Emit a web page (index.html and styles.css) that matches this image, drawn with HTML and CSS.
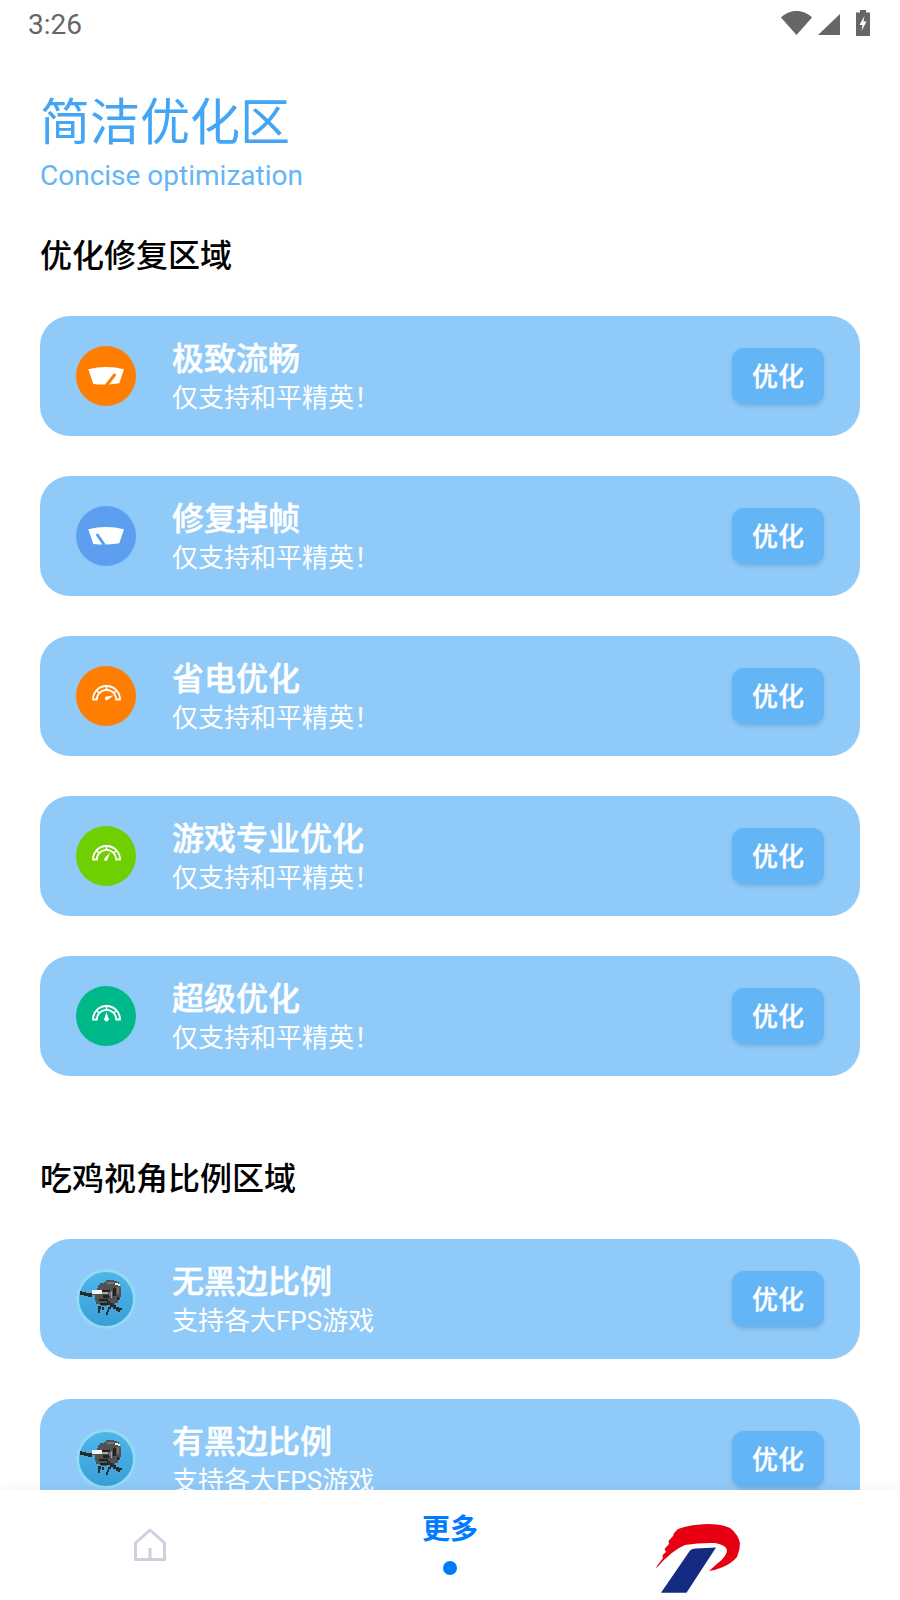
FILE: index.html
```html
<!DOCTYPE html>
<html lang="zh">
<head>
<meta charset="utf-8">
<title>简洁优化区</title>
<link rel="stylesheet" href="styles.css">
</head>
<body>
<svg class="defs" width="0" height="0">
  <defs>
    <linearGradient id="sky" x1="0" y1="0" x2="0" y2="1">
      <stop offset="0" stop-color="#4db6ea"/>
      <stop offset="1" stop-color="#3a9fd8"/>
    </linearGradient>
    <g id="gauge" fill="none" stroke="#fff">
      <path stroke-width="1.8" d="M17 33.500a13.500 13.500 0 0 1 27 0h-3.800a9.700 9.700 0 0 0-19.400 0z"/>
      <path stroke-width="1.600" d="M21 25l3 2.700M30.500 20v4.200M40 25l-3 2.700"/>
    </g>
    <g id="soldier">
      <circle cx="30" cy="30" r="30" fill="#93daf5"/>
      <circle cx="30" cy="30" r="27" fill="url(#sky)"/>
      <g shape-rendering="crispEdges">
        <path fill="#525252" d="M28 13h2v-2h8v1h3v1h2v2h1v3h1v10h-1v3h-2v3h-3v2H31v1h-6v-2h-5v-3h-1v-6h-3v-3h3v-2h2v-2h1v-3h2v-2h3z"/>
        <path fill="#757575" d="M31 13h7v2h-7zM41 18h2v7h-2zM33 22h3v5h-3z"/>
        <path fill="#222" d="M26 21h8v2h-8zM27 26h6v3h-6zM37 19h3v8h-3zM23 30h9v2h-9zM24 34h7v2h-7zM41 28h2v3h-2z"/>
        <path fill="#f4f4f4" d="M16 21h10v4H16zM39 14h3v1h2v2h-2v-1h-3z"/>
        <path fill="#a8a8a8" d="M35 23h1v6h-1zM26 23h6v2h-6z"/>
        <path fill="#2a2a2a" d="M4 22h2v1h4v1h6v4h-4v-1H8v-1H4zM31 32h3v2h3v2h3v2h3v1h3v2h-2v2h-2v-1h-2v-2h-3v-2h-3v-2h-3zM32 38h3v2h-2v3h-1v3h-2v-3h1v-2h1zM22 37h3v3h-1v4h-2zM26 38h2v3h-2z"/>
      </g>
    </g>
  </defs>
</svg>
<div class="app">
  <header class="status">
    <span class="time">3:26</span>
    <div class="status-icons">
      <svg class="wifi" width="31" height="24" viewBox="0 0 31 24"><path fill="#666" d="M15.500 24L0 6.500C4 2.500 9.500 0 15.500 0S27 2.500 31 6.500z"/></svg>
      <svg class="signal" width="22" height="21" viewBox="0 0 22 21"><path fill="#666" d="M22 0v21H0z"/></svg>
      <svg class="battery" width="14" height="26" viewBox="0 0 14 26"><path fill="#666" d="M4 0h6v2.500h4V26H0V2.500h4z"/><path fill="#fff" d="M8.500 6L3.500 15h3l-1 6 5-9.500h-3z"/></svg>
    </div>
  </header>
  <main class="content">
    <div class="hero">
      <h1 class="hero-title">简洁优化区</h1>
      <p class="hero-sub">Concise optimization</p>
    </div>
    <section class="group">
      <h2 class="group-title">优化修复区域</h2>
      <article class="card">
        <div class="badge orange">
          <svg viewBox="0 0 60 60"><path fill="#fff" d="M12.300 23.300Q30 18.500 48 23.300L43.300 37.300Q30 39.500 17.300 38z"/><path fill="none" stroke="#ff7d00" stroke-width="3" stroke-linecap="round" d="M31 38.500l7.500-9.500"/></svg>
        </div>
        <div class="card-text"><h3>极致流畅</h3><p>仅支持和平精英！</p></div>
        <button class="opt">优化</button>
      </article>
      <article class="card">
        <div class="badge blue">
          <svg viewBox="0 0 60 60"><path fill="#fff" d="M12.300 23.300Q30 18.500 48 23.300L43.300 37.300Q30 39.500 17.300 38z"/><path fill="none" stroke="#5c9ff0" stroke-width="3" stroke-linecap="round" d="M28 38.500l-6.500-9.500"/></svg>
        </div>
        <div class="card-text"><h3>修复掉帧</h3><p>仅支持和平精英！</p></div>
        <button class="opt">优化</button>
      </article>
      <article class="card">
        <div class="badge orange">
          <svg viewBox="0 0 60 60"><use href="#gauge"/><path fill="#fff" d="M29 33a2 2 0 0 1 1.500-2.500l7-1-6 4.500a2 2 0 0 1-2.500-1z"/></svg>
        </div>
        <div class="card-text"><h3>省电优化</h3><p>仅支持和平精英！</p></div>
        <button class="opt">优化</button>
      </article>
      <article class="card">
        <div class="badge green">
          <svg viewBox="0 0 60 60"><use href="#gauge"/><path fill="#fff" d="M28.500 34.500a2.200 2.200 0 0 1 .5-2.800l5-5.200-2.400 7a2 2 0 0 1-3.100 1z"/></svg>
        </div>
        <div class="card-text"><h3>游戏专业优化</h3><p>仅支持和平精英！</p></div>
        <button class="opt">优化</button>
      </article>
      <article class="card">
        <div class="badge teal">
          <svg viewBox="0 0 60 60"><use href="#gauge"/><path fill="#fff" d="M28.800 34.500a2.200 2.200 0 0 1 0-3l1.700-5.500 1.700 5.500a2.200 2.200 0 0 1-3.400 3z"/></svg>
        </div>
        <div class="card-text"><h3>超级优化</h3><p>仅支持和平精英！</p></div>
        <button class="opt">优化</button>
      </article>
    </section>
    <section class="group second">
      <h2 class="group-title">吃鸡视角比例区域</h2>
      <article class="card">
        <div class="badge"><svg viewBox="0 0 60 60"><use href="#soldier"/></svg></div>
        <div class="card-text"><h3>无黑边比例</h3><p>支持各大FPS游戏</p></div>
        <button class="opt">优化</button>
      </article>
      <article class="card">
        <div class="badge"><svg viewBox="0 0 60 60"><use href="#soldier"/></svg></div>
        <div class="card-text"><h3>有黑边比例</h3><p>支持各大FPS游戏</p></div>
        <button class="opt">优化</button>
      </article>
    </section>
  </main>
  <nav class="tabs">
    <div class="tab">
      <svg class="home" width="34" height="34" viewBox="0 0 34 34"><path fill="none" stroke="#ccd1de" stroke-width="3" stroke-linejoin="round" d="M17 2L2.500 15v16.500h29V15zM17 31.500V20"/></svg>
    </div>
    <div class="tab active">
      <span class="tab-label">更多</span>
      <span class="tab-dot"></span>
    </div>
    <div class="tab logo-tab">
      <svg class="logo" width="130" height="100" viewBox="0 0 130 100">
        <path fill="#152a82" d="M31 92.700L60 50.500Q62 48.500 66 48.500L86 47.500 56.500 92.700z"/>
        <path fill="#e60012" d="M26 68.500L27 66 33 58 32.500 55 36 52 34.500 49 39 44 38.500 41 43 36 44 33 48 29Q60 24.500 77 24 92 24 100 28 108 34 110 43 110 50 107 57 102 63 93 67 86 70 79 71L88 63Q97 56 97 50 96 45 85 43 70 42.500 55 45 42 50 26 68.500z"/>
      </svg>
    </div>
  </nav>
</div>
</body>
</html>
```
FILE: styles.css
```css
* { box-sizing: border-box; }
html, body { margin: 0; padding: 0; background: #fff; }
body { font-family: Roboto, "Noto Sans CJK SC", sans-serif; }
.defs { position: absolute; }
.app { width: 900px; height: 1600px; display: flex; flex-direction: column; overflow: hidden; background: #fff; }

.status { height: 50px; flex: none; display: flex; align-items: center; justify-content: space-between; padding: 0 30px 0 28px; }
.time { font-size: 28px; line-height: 52px; color: #666; }
.status-icons { display: flex; align-items: flex-start; height: 50px; }
.wifi { margin: 11px 6px 0 0; }
.signal { margin: 14px 16px 0 0; }
.battery { margin-top: 10px; }

.content { flex: 1; min-height: 0; overflow: hidden; padding: 0 40px; }
.hero { padding-top: 38px; }
.hero-title { margin: 0; font-size: 50px; line-height: 71px; font-weight: 400; color: #42a5f5; }
.hero-sub { margin: 0; font-size: 28px; line-height: 33px; color: #64b5f6; }

.group { padding-top: 41px; }
.group.second { padding-top: 40px; }
.group-title { margin: 0 0 37px; font-size: 32px; line-height: 46px; font-weight: 500; color: #000; }

.card { width: 820px; height: 120px; margin-bottom: 40px; padding: 0 36px; display: flex; align-items: center; background: #90caf9; border-radius: 30px; }
.badge { width: 60px; height: 60px; flex: none; border-radius: 50%; overflow: hidden; }
.badge svg { display: block; width: 60px; height: 60px; }
.orange { background: #ff7d00; }
.blue { background: #5c9ff0; }
.green { background: #70cf00; }
.teal { background: #00b98b; }
.card-text { flex: 1; margin-left: 36px; padding-top: 2px; color: #fff; }
.card-text h3 { margin: 0; font-size: 32px; line-height: 42px; font-weight: 500; -webkit-text-stroke: .5px #fff; }
.card-text p { margin: 0; font-size: 26px; line-height: 36px; font-weight: 400; }
.opt { width: 92px; height: 56px; padding: 1px 0 0; border: 0; border-radius: 12px; background: #64b5f6; color: #fff; font: 500 26px/56px Roboto, "Noto Sans CJK SC", sans-serif; -webkit-text-stroke: .3px #fff; box-shadow: 0 2px 4px rgba(0,0,0,.14); }

.tabs { flex: none; height: 110px; display: grid; grid-template-columns: 300px 300px 300px; background: #fff; box-shadow: 0 -2px 10px rgba(0,0,0,.05); position: relative; }
.tab { display: flex; flex-direction: column; align-items: center; }
.logo-tab { align-items: flex-start; }
.home { margin-top: 38px; }
.tab-label { margin-top: 20px; font-size: 28px; line-height: 40px; font-weight: 700; color: #007aff; }
.tab-dot { width: 14px; height: 14px; margin-top: 11px; border-radius: 50%; background: #007aff; }
.logo { margin: 10px 0 0 30px; }
```
